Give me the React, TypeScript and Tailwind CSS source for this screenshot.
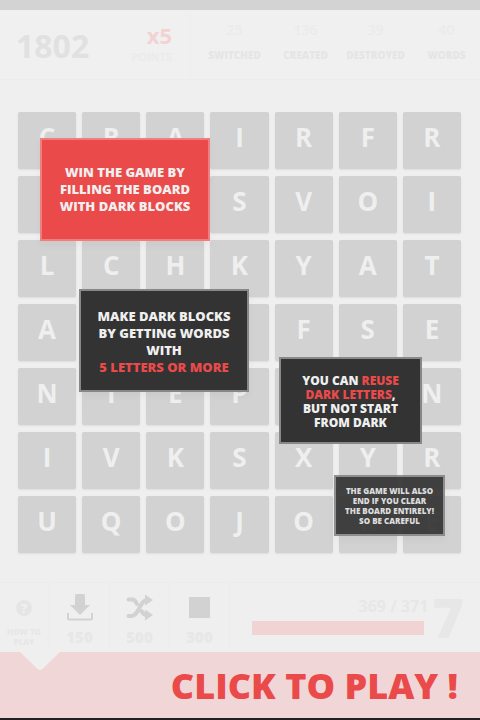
import React from "react";

const board: string[] = [
  "CRAIRFR",
  "   SVOI",
  "LCHKYAT",
  "A   FSE",
  "NIEP  N",
  "IVKSXYR",
  "UQOJOKE",
];

const stats = [
  { value: "25", label: "SWITCHED", width: "w-[77px]" },
  { value: "136", label: "CREATED", width: "w-[65px]" },
  { value: "39", label: "DESTROYED", width: "w-[75px]" },
  { value: "40", label: "WORDS", width: "w-[67px]" },
];

function DownloadIcon() {
  return (
    <svg viewBox="0 0 26 27" className="h-[27px] w-[26px]" fill="#d2d2d2" aria-hidden="true">
      <path d="M9.500 0h7Q18 0 18 1.500V11h5L13 21 3 11h5V1.500Q8 0 9.500 0Z" />
      <path d="M1 19v5Q1 25.500 2.500 25.500h21q1.500 0 1.500-1.500V19" fill="none" stroke="#d2d2d2" strokeWidth="2" />
    </svg>
  );
}

function ShuffleIcon() {
  return (
    <svg viewBox="0 0 27 27" className="h-[27px] w-[27px]" fill="#d2d2d2" aria-hidden="true">
      <path
        d="M2.500 5.500h3.500c2.500 0 4 2 5 4.500M15.500 17c1 2.500 2.500 4 5.500 4M2.500 22h3.500c6.500 0 8-16 15-16"
        fill="none"
        stroke="#d2d2d2"
        strokeWidth="4"
        strokeLinecap="round"
      />
      <path d="M19 .5 27 6l-8 5.500ZM19 15.500 27 21l-8 5.500Z" />
    </svg>
  );
}

function PowerUp({ cost, children }: { cost: string; children: React.ReactNode }) {
  return (
    <button
      type="button"
      className="flex w-[60px] flex-col items-center border-l border-[#ececec] pt-[10px] text-[#e7e7e7]"
    >
      <span className="flex h-7 items-center justify-center">{children}</span>
      <span className="mt-1 text-[15px] font-extrabold leading-6">{cost}</span>
    </button>
  );
}

export default function App() {
  return (
    <div className="flex min-h-screen flex-col bg-[#efefef] font-['Open_Sans','Noto_Sans',sans-serif]">
      <div className="h-[10px] bg-[#d3d3d3]" />

      <header className="flex h-[70px] border-b border-[#ececec] bg-[#f0f0f0]">
        <div className="flex min-w-0 flex-1 justify-between pl-4 pr-[18px]">
          <strong className="pt-4 text-[32px] font-bold leading-10 text-[#e1e1e1]">1802</strong>
          <div className="pt-[11px] text-right font-bold">
            <div className="text-[22px] leading-7 text-[#f2d3d3]">x5</div>
            <div className="text-[11px] leading-4 text-[#ebebeb]">POINTS</div>
          </div>
        </div>
        <dl className="flex border-l border-[#eeeeee] pl-[5px] text-center">
          {stats.map((s) => (
            <div key={s.label} className={`flex flex-col-reverse justify-end pt-2 ${s.width}`}>
              <dt className="pt-[5px] text-[10px] font-extrabold leading-4 text-[#e5e5e5]">{s.label}</dt>
              <dd className="text-[14px] font-semibold leading-6 text-[#ebebeb]">{s.value}</dd>
            </div>
          ))}
        </dl>
      </header>

      <main className="relative flex-1 px-[18px] pb-[29px] pt-8">
        <div className="grid grid-cols-7 gap-x-[6px] gap-y-[7px] pr-px">
          {board.flatMap((row, r) =>
            row.split("").map((letter, c) => (
              <button
                key={`${r}-${c}`}
                type="button"
                className="flex h-[57px] justify-center rounded-[2px] bg-[#d2d2d2] pt-[7px] text-[26px] font-bold leading-9 text-[#efefef] shadow-[0_1px_2px_#dcdcdc]"
              >
                {letter}
              </button>
            )),
          )}
        </div>

        <p className="absolute left-[40px] top-[58px] flex h-[103px] w-[170px] items-center justify-center border-2 border-[#f07e7e] bg-[#ea4a4a] text-center text-[13px] font-extrabold leading-[17px] text-[#efefef] shadow-[0_4px_8px_rgba(0,0,0,0.04)]">
          <span>
            WIN THE GAME BY
            <br />
            FILLING THE BOARD
            <br />
            WITH DARK BLOCKS
          </span>
        </p>
        <p className="absolute left-[79px] top-[209px] flex h-[103px] w-[170px] items-center justify-center border-2 border-[#888888] bg-[#333333] pt-[2px] text-center text-[13px] font-extrabold leading-[17px] text-[#efefef] shadow-[0_4px_8px_rgba(0,0,0,0.04)]">
          <span>
            MAKE DARK BLOCKS
            <br />
            BY GETTING WORDS
            <br />
            WITH
            <br />
            <span className="text-[#ea4a4a]">5 LETTERS OR MORE</span>
          </span>
        </p>
        <p className="absolute left-[279px] top-[277px] flex h-[87px] w-[143px] items-center justify-center border-2 border-[#888888] bg-[#333333] pt-[2px] text-center text-[12px] font-extrabold leading-[14px] text-[#efefef]">
          <span>
            YOU CAN <span className="text-[#ea4a4a]">REUSE</span>
            <br />
            <span className="text-[#ea4a4a]">DARK LETTERS</span>,
            <br />
            BUT NOT START
            <br />
            FROM DARK
          </span>
        </p>
        <p className="absolute left-[334px] top-[395px] flex h-[61px] w-[111px] items-center justify-center border-2 border-[#888888] bg-[#333333] text-center text-[8px] font-extrabold leading-[10px] text-[#dddddd] opacity-92 shadow-[0_4px_8px_rgba(0,0,0,0.04)]">
          <span>
            THE GAME WILL ALSO
            <br />
            END IF YOU CLEAR
            <br />
            THE BOARD ENTIRELY!
            <br />
            SO BE CAREFUL
          </span>
        </p>
      </main>

      <section className="flex h-[70px] border-t border-[#ececec]">
        <button
          type="button"
          className="flex w-[49px] flex-col items-center pr-px pt-[17px] text-[8px] font-extrabold leading-[10px] text-[#e7e7e7]"
        >
          <span className="flex size-4 items-center justify-center rounded-full bg-[#e5e5e5] text-[13px] text-[#f0f0f0]">
            ?
          </span>
          <span className="mt-[11px]">
            HOW TO
            <br />
            PLAY
          </span>
        </button>
        <PowerUp cost="150">
          <DownloadIcon />
        </PowerUp>
        <PowerUp cost="500">
          <ShuffleIcon />
        </PowerUp>
        <PowerUp cost="300">
          <span className="size-[21px] bg-[#d2d2d2]" />
        </PowerUp>
        <div className="flex min-w-0 flex-1 border-l border-[#ececec] pl-[22px] pr-4">
          <div className="min-w-0 flex-1 pt-[11px]">
            <div className="text-right text-[16px] font-bold leading-6 text-[#e7e7e7]">369 / 371</div>
            <div
              role="progressbar"
              aria-label="Level progress"
              aria-valuenow={369}
              aria-valuemax={371}
              className="mt-[3px] mr-1 h-[14px] bg-[#f2d3d3]"
            />
          </div>
          <div className="ml-1 text-[54px] font-extrabold leading-[68px] text-[#e7e7e7]">7</div>
        </div>
      </section>

      <button
        type="button"
        className="relative h-[68px] border-b-2 border-[#242022] bg-[#f0d6d6] pr-[22px] pt-[2px] text-right text-[36px] font-extrabold leading-[64px] text-[#ea4a4a]"
      >
        <svg viewBox="0 0 40 18" className="absolute left-5 top-0 h-[18px] w-10" fill="#efefef" aria-hidden="true">
          <path d="M0 0h40L22.500 17q-2.500 2-5 0Z" />
        </svg>
        CLICK TO PLAY !
      </button>
    </div>
  );
}
